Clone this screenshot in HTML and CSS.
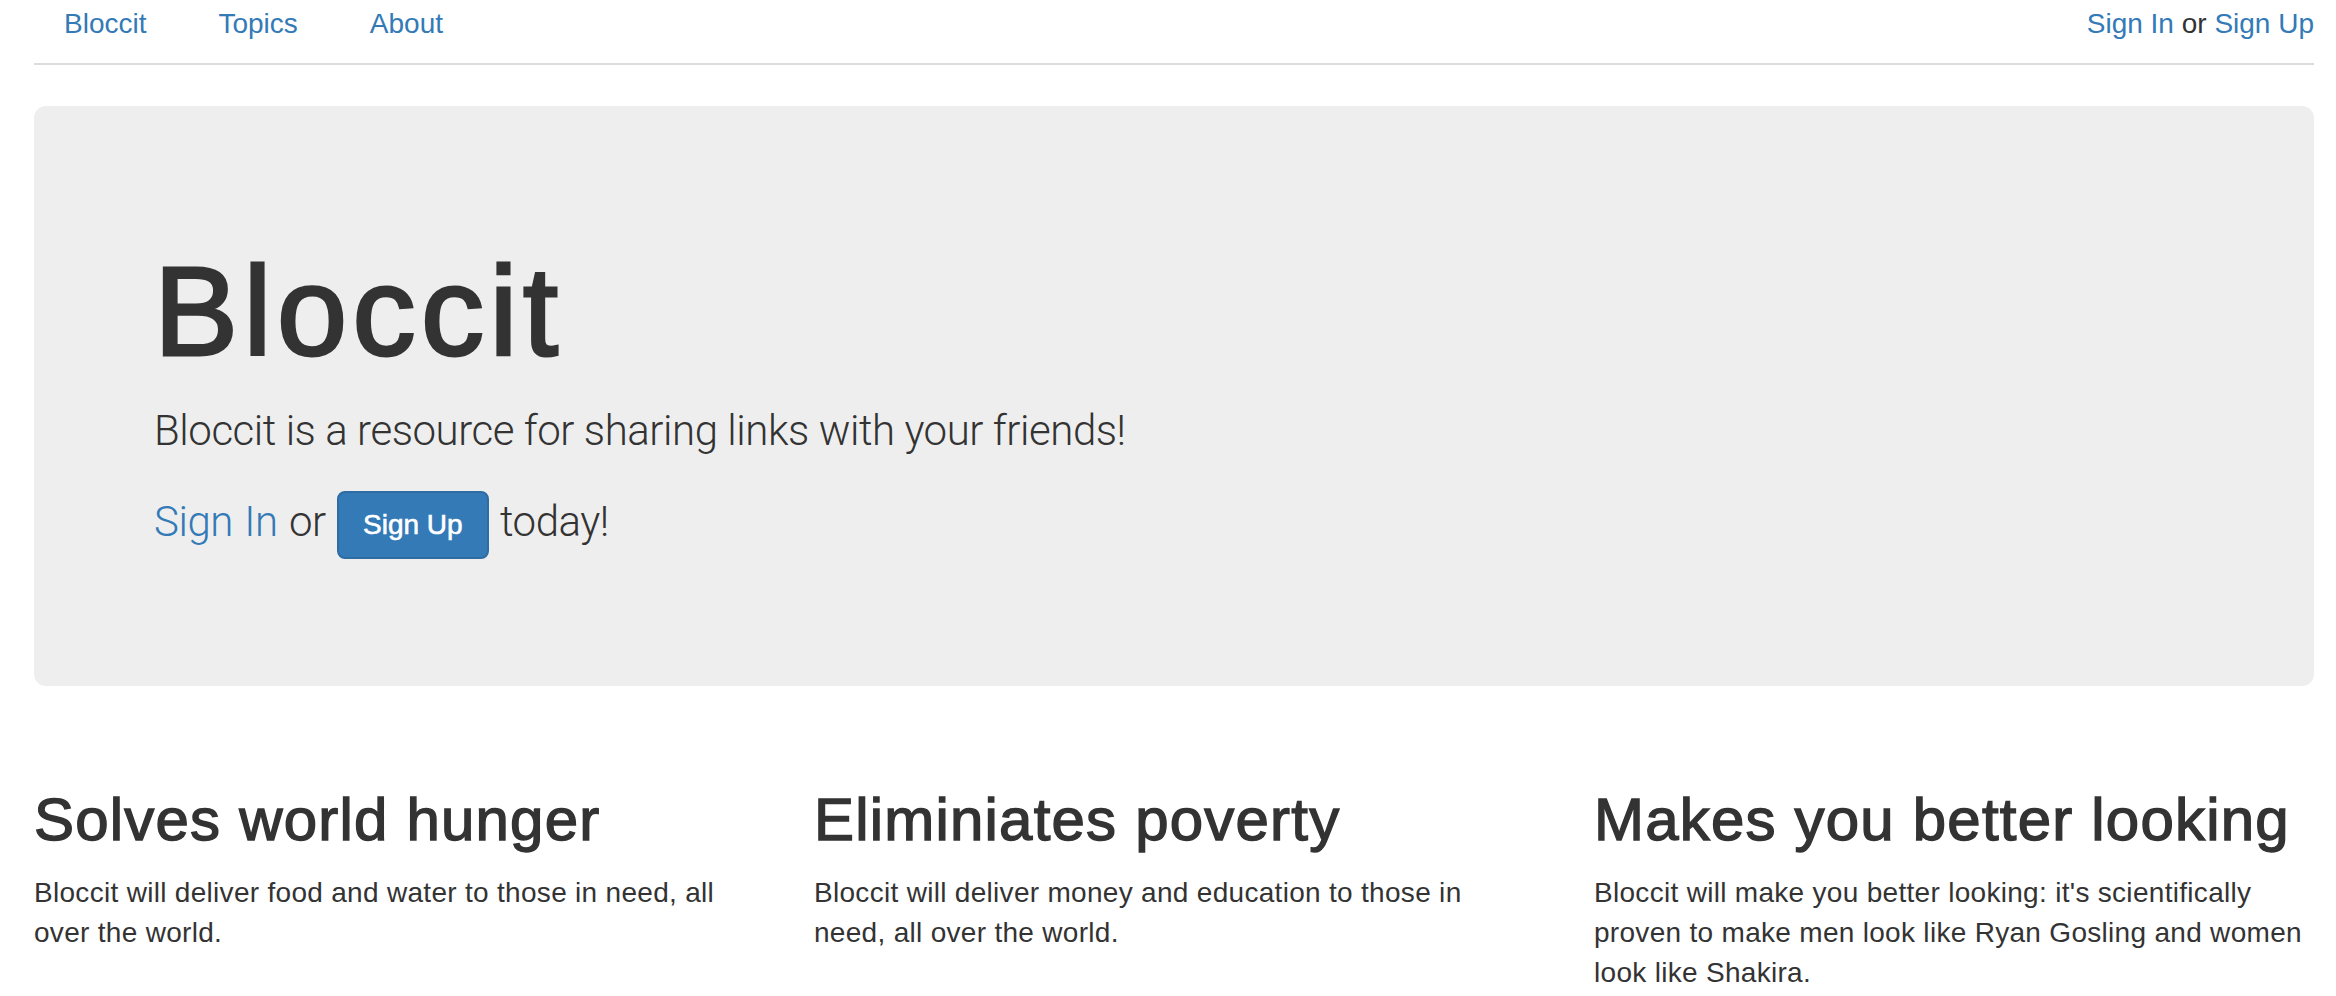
FILE: index.html
```html
<!DOCTYPE html>
<html lang="en">
<head>
<meta charset="utf-8">
<title>Bloccit</title>
<link rel="stylesheet" href="styles.css">
</head>
<body>
<div class="page">
  <header class="topbar">
    <ul class="nav">
      <li><a href="#">Bloccit</a></li>
      <li><a href="#">Topics</a></li>
      <li><a href="#">About</a></li>
    </ul>
    <div class="auth"><a href="#">Sign In</a> or <a href="#">Sign Up</a></div>
  </header>

  <section class="jumbotron">
    <h1>Bloccit</h1>
    <p class="lead">Bloccit is a resource for sharing links with your friends!</p>
    <p class="lead lead-actions"><a href="#">Sign In</a> or <a href="#" class="btn">Sign Up</a> today!</p>
  </section>

  <div class="row">
    <div class="col">
      <h2>Solves world hunger</h2>
      <p>Bloccit will deliver food and water to those in need, all over the world.</p>
    </div>
    <div class="col">
      <h2>Eliminiates poverty</h2>
      <p>Bloccit will deliver money and education to those in need, all over the world.</p>
    </div>
    <div class="col">
      <h2>Makes you better looking</h2>
      <p>Bloccit will make you better looking: it's scientifically proven to make men look like Ryan Gosling and women look like Shakira.</p>
    </div>
  </div>
</div>
</body>
</html>
```

FILE: styles.css
```css
* { box-sizing: border-box; }

html, body {
  margin: 0;
  padding: 0;
  background: #fff;
}

body {
  font-family: "Liberation Sans", Arial, sans-serif;
  font-size: 28px;
  line-height: 40px;
  color: #333;
}

a {
  color: #337ab7;
  text-decoration: none;
}

.page {
  width: 2280px;
  margin-left: 34px;
}

/* top bar */
.topbar {
  display: flex;
  justify-content: space-between;
  align-items: flex-start;
  padding-top: 4px;
  padding-bottom: 19px;
  border-bottom: 2px solid #ddd;
}

.nav {
  list-style: none;
  margin: 0;
  padding: 0;
  display: flex;
  gap: 12px;
}

.nav a {
  display: block;
  padding: 0 30px;
}

/* jumbotron */
.jumbotron {
  margin-top: 41px;
  background: #eee;
  border-radius: 12px;
  padding: 96px 120px 97px;
}

.jumbotron h1 {
  margin: 40px 0 20px;
  font-size: 126px;
  line-height: 139px;
  font-weight: 400;
  letter-spacing: 5.5px;
  -webkit-text-stroke: 3px #333;
  color: #333;
}

.lead {
  margin: 0 0 30px;
  font-family: Roboto, "Liberation Sans", sans-serif;
  font-size: 42px;
  line-height: 60px;
  font-weight: 300;
  letter-spacing: -0.45px;
}

.lead-actions {
  word-spacing: 1.5px;
}

.btn {
  display: inline-block;
  vertical-align: middle;
  font-family: "Liberation Sans", Arial, sans-serif;
  font-size: 28px;
  line-height: 40px;
  font-weight: 400;
  letter-spacing: 0;
  word-spacing: 0;
  padding: 12px 24px;
  color: #fff;
  -webkit-text-stroke: 0.6px #fff;
  background: #337ab7;
  border: 2px solid #2e6da4;
  border-radius: 8px;
}

/* feature columns */
.row {
  margin-top: 61px;
  display: grid;
  grid-template-columns: repeat(3, 720px);
  column-gap: 60px;
}

.col h2 {
  margin: 40px 0 20px;
  font-size: 60px;
  line-height: 66px;
  font-weight: 400;
  letter-spacing: 1.2px;
  -webkit-text-stroke: 1.4px #333;
  color: #333;
}

.col p {
  margin: 0 0 20px;
  letter-spacing: 0.3px;
}
```
